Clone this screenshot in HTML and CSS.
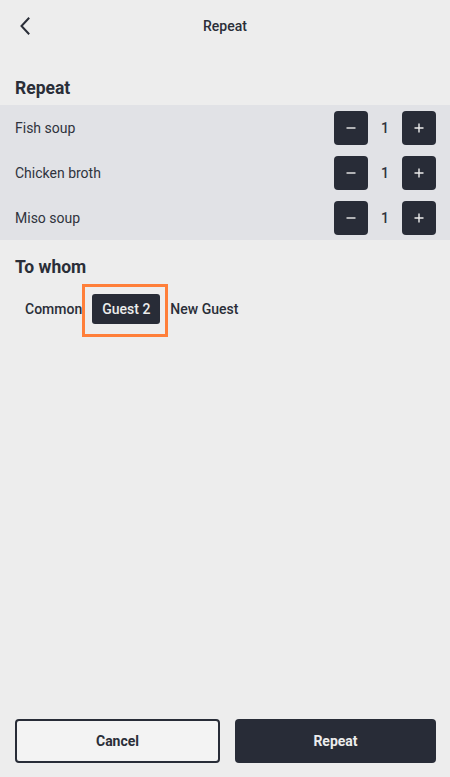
FILE: index.html
```html
<!DOCTYPE html>
<html lang="en">
<head>
<meta charset="utf-8">
<title>Repeat</title>
<link rel="stylesheet" href="styles.css">
</head>
<body>
<div class="screen">
  <header class="topbar">
    <button class="back" aria-label="Back">
      <svg width="12" height="18" viewBox="0 0 12 18"><path d="M9.5 1.5 L2.5 9 L9.5 16.5" fill="none" stroke="#2a2e38" stroke-width="2" stroke-linecap="square"/></svg>
    </button>
    <div class="title">Repeat</div>
  </header>

  <h2 class="section-title first">Repeat</h2>
  <div class="items">
    <div class="item">
      <span class="item-name">Fish soup</span>
      <div class="stepper">
        <button class="step"><svg width="12" height="12" viewBox="0 0 12 12"><path d="M1.5 6 H10.5" stroke="#ececec" stroke-width="1.4"/></svg></button>
        <span class="count">1</span>
        <button class="step"><svg width="12" height="12" viewBox="0 0 12 12"><path d="M1.5 6 H10.5 M6 1.5 V10.5" stroke="#ececec" stroke-width="1.4"/></svg></button>
      </div>
    </div>
    <div class="item">
      <span class="item-name">Chicken broth</span>
      <div class="stepper">
        <button class="step"><svg width="12" height="12" viewBox="0 0 12 12"><path d="M1.5 6 H10.5" stroke="#ececec" stroke-width="1.4"/></svg></button>
        <span class="count">1</span>
        <button class="step"><svg width="12" height="12" viewBox="0 0 12 12"><path d="M1.5 6 H10.5 M6 1.5 V10.5" stroke="#ececec" stroke-width="1.4"/></svg></button>
      </div>
    </div>
    <div class="item">
      <span class="item-name">Miso soup</span>
      <div class="stepper">
        <button class="step"><svg width="12" height="12" viewBox="0 0 12 12"><path d="M1.5 6 H10.5" stroke="#ececec" stroke-width="1.4"/></svg></button>
        <span class="count">1</span>
        <button class="step"><svg width="12" height="12" viewBox="0 0 12 12"><path d="M1.5 6 H10.5 M6 1.5 V10.5" stroke="#ececec" stroke-width="1.4"/></svg></button>
      </div>
    </div>
  </div>

  <h2 class="section-title second">To whom</h2>
  <div class="chips">
    <span class="chip">Common</span>
    <span class="chip active">Guest 2<span class="highlight"></span></span>
    <span class="chip">New Guest</span>
  </div>

  <footer class="actions">
    <button class="btn btn-outline">Cancel</button>
    <button class="btn btn-solid">Repeat</button>
  </footer>
</div>
</body>
</html>
```
FILE: styles.css
```css
* { box-sizing: border-box; }
html, body {
  margin: 0;
  padding: 0;
  background: #ededed;
}
body {
  font-family: Roboto, "Liberation Sans", Arial, sans-serif;
  color: #282c37;
}
button {
  font-family: inherit;
  border: none;
  background: none;
  padding: 0;
  margin: 0;
  cursor: pointer;
}
.screen {
  height: 777px;
  display: flex;
  flex-direction: column;
}
.topbar {
  position: relative;
  height: 52px;
  display: flex;
  align-items: center;
  justify-content: center;
}
.back {
  position: absolute;
  left: 19px;
  top: 17px;
  width: 12px;
  height: 18px;
  display: flex;
}
.title {
  font-size: 14px;
  font-weight: 500;
  line-height: 20px;
  color: #2a2e38;
}
.section-title {
  margin: 0;
  padding: 0 15px;
  font-size: 17.5px;
  font-weight: 700;
  line-height: 21px;
  color: #2a2e38;
}
.section-title.first {
  padding-top: 26px;
  padding-bottom: 6px;
}
.section-title.second {
  padding-top: 17px;
  padding-bottom: 16px;
}
.items {
  background: #e1e2e6;
}
.item {
  height: 45px;
  display: flex;
  align-items: center;
  justify-content: space-between;
  padding: 0 14px 0 15px;
}
.item-name {
  font-size: 14px;
  color: #2f333d;
}
.stepper {
  display: flex;
  align-items: center;
}
.step {
  width: 34px;
  height: 34px;
  border-radius: 4px;
  background: #282c37;
  display: flex;
  align-items: center;
  justify-content: center;
}
.count {
  width: 34px;
  text-align: center;
  font-size: 14px;
  font-weight: 500;
  color: #2f333d;
}
.chips {
  display: flex;
  align-items: center;
  padding: 0 15px;
}
.chip {
  position: relative;
  height: 30px;
  display: flex;
  align-items: center;
  padding: 0 10px;
  font-size: 14px;
  font-weight: 500;
  color: #2a2e38;
  border-radius: 3px;
}
.chip.active {
  background: #282c37;
  color: #ececec;
  padding: 0 10px;
}
.highlight {
  position: absolute;
  left: -10px;
  top: -10px;
  right: -8px;
  bottom: -13px;
  border: 3px solid #ff7f3a;
  pointer-events: none;
}
.actions {
  margin-top: auto;
  display: flex;
  gap: 15px;
  padding: 0 14px 14px 15px;
}
.btn {
  flex: 1 1 0;
  min-width: 0;
  height: 44px;
  border-radius: 4px;
  font-size: 14px;
  font-weight: 700;
}
.btn-outline {
  border: 2px solid #282c37;
  background: #f3f3f3;
  color: #2a2e38;
}
.btn-solid {
  background: #282c37;
  color: #ececec;
}
```
